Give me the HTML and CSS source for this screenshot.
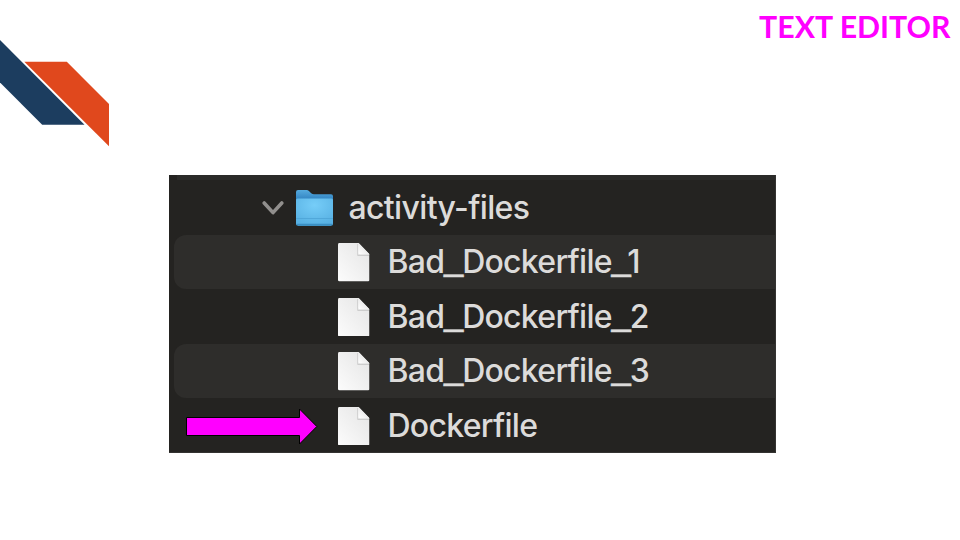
FILE: index.html
```
<!DOCTYPE html>
<html lang="en">
<head>
<meta charset="utf-8">
<title>Text Editor</title>
<link rel="stylesheet" href="styles.css">
</head>
<body>
<svg width="0" height="0" class="defs" aria-hidden="true">
  <defs>
    <linearGradient id="paper" x1="0" y1="1" x2="1" y2="0"><stop offset="0" stop-color="#fcfcfc"/><stop offset="1" stop-color="#e4e4e4"/></linearGradient>
    <linearGradient id="fold" x1="0" y1="1" x2="1" y2="0"><stop offset="0" stop-color="#fff"/><stop offset=".5" stop-color="#ececec"/><stop offset="1" stop-color="#d0d0d0"/></linearGradient>
    <linearGradient id="back" x1="0" y1="0" x2="0" y2="1"><stop offset="0" stop-color="#55aade"/><stop offset=".24" stop-color="#3587c4"/><stop offset="1" stop-color="#3587b8"/></linearGradient>
    <radialGradient id="front" cx=".5" cy=".25" r=".75"><stop offset="0" stop-color="#76cdf8"/><stop offset="1" stop-color="#58b1e3"/></radialGradient>
    <symbol id="file" viewBox="0 0 32 39" preserveAspectRatio="none">
      <path d="M1.500 0H21L32 11.300V37.500Q32 39 30.500 39H1.500Q0 39 0 37.500V1.500Q0 0 1.500 0Z" fill="url(#paper)"/>
      <path d="M20.300 1V12H31.500V13H19.700V1Z" fill="#a9a9a9" opacity=".6"/>
      <path d="M20.800 0V10.200Q20.800 11.300 22 11.300H32Z" fill="url(#fold)"/>
    </symbol>
  </defs>
</svg>
<header class="top">
  <svg class="brand" width="110" height="150" viewBox="0 0 110 150">
    <path d="M0 40L84.500 124.800H42.200L0 82.500Z" fill="#1c3d5f"/>
    <path d="M24.300 61.700H66.800L109 104V146.300Z" fill="#e0481d"/>
  </svg>
  <h1 class="title">TEXT EDITOR</h1>
</header>
<main class="finder">
  <div class="row folder">
    <svg class="chevron" width="22" height="16" viewBox="0 0 22 16"><path d="M2.200 3L11 12.600L19.800 3" fill="none" stroke="#918f8d" stroke-width="3.600" stroke-linecap="round" stroke-linejoin="round"/></svg>
    <svg class="folder-icon" width="37" height="37" viewBox="0 0 37 37">
      <path d="M2 0H10.500Q12 0 13.200 1.200L15.200 3.200Q16.500 4.300 18 4.300H35Q37 4.300 37 6.300V34Q37 36 34.500 36H2.500Q0 36 0 34V2Q0 0 2 0Z" fill="url(#back)"/>
      <path d="M0 10Q0 8.500 1.500 8.500H35.500Q37 8.500 37 10V33Q37 35.200 34.800 35.200H2.200Q0 35.200 0 33Z" fill="url(#front)"/>
      <path d="M0 28.500H37" stroke="#4ca3d5" stroke-width=".8"/>
      <path d="M1 34.400H36" stroke="#3b8fc3" stroke-width="1.200"/>
    </svg>
    <span class="name n-folder">activity-files</span>
  </div>
  <div class="row striped"><svg class="file-icon"><use href="#file"/></svg><span class="name">Bad<span class="u">_</span>Dockerfile<span class="u u-one">_</span>1</span></div>
  <div class="row"><svg class="file-icon"><use href="#file"/></svg><span class="name">Bad<span class="u">_</span>Dockerfile<span class="u">_</span>2</span></div>
  <div class="row striped"><svg class="file-icon"><use href="#file"/></svg><span class="name">Bad<span class="u">_</span>Dockerfile<span class="u">_</span>3</span></div>
  <div class="row"><svg class="file-icon"><use href="#file"/></svg><span class="name">Dockerfile</span>
    <svg class="arrow" width="133" height="40" viewBox="0 0 133 40"><path d="M1.500 11.500H114.500V3L131.800 20.500L114.500 38V29.500H1.500Z" fill="#f0f" stroke="#000" stroke-width="1"/></svg>
  </div>
</main>
</body>
</html>
```
FILE: styles.css
```
* { box-sizing: border-box; }
body { margin: 0; width: 960px; height: 540px; overflow: hidden; background: #fff; }
.defs { display: block; height: 0; }
.top { display: flex; justify-content: space-between; height: 175px; padding-right: 9.500px; }
.brand { display: block; }
.title { margin: 8px 0 0; font: 700 30.3px/36px Lato, sans-serif; color: #f0f; white-space: nowrap; }
.finder {
  width: 606.700px; height: 277.700px; margin-left: 169px; padding: 5px 0 0 5px;
  background: linear-gradient(#2b2b29, #2b2b29) 8px 0 / 100% 5px no-repeat, #242321;
  border-right: 1px solid #343331; border-bottom: 1px solid #343331;
}
.row { position: relative; display: flex; align-items: center; height: 54.550px; padding-left: 164px; }
.folder { padding-left: 88px; }
.striped { background: #2e2d2b; border-radius: 12px 0 0 12px; }
.chevron { margin-top: 2px; }
.folder-icon { margin: 2px 0 0 12px; }
.file-icon { width: 31.500px; height: 38.500px; margin-top: 1px; }
.name { margin: 1px 0 0 18px; font: 500 32px/40px Inter, sans-serif; letter-spacing: -.72px; color: #dcdbda; white-space: nowrap; }
.n-folder { margin-left: 15.500px; letter-spacing: -.65px; }
.u { position: relative; top: -3px; margin: 0 -1.200px 0 -.3px; font: 400 34.7px/1 "Liberation Sans", sans-serif; letter-spacing: 0; -webkit-text-stroke: .4px #dcdbda; }
.u-one { margin-right: -3.600px; }
.arrow { position: absolute; left: 11px; top: 8px; }
```
